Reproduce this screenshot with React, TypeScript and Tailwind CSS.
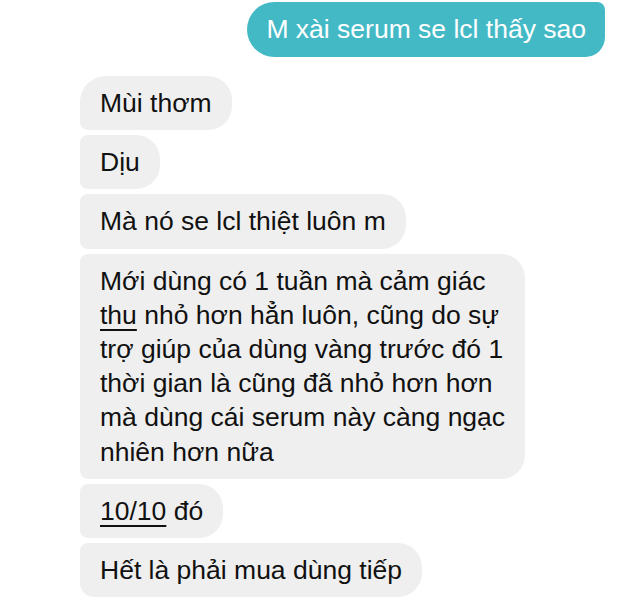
import React from "react";

type Msg = {
  text: React.ReactNode;
  shape: string;
};

const incoming: Msg[] = [
  { text: "Mùi thơm", shape: "rounded-tl-[26px] rounded-bl-[8px]" },
  { text: "Dịu", shape: "rounded-tl-[8px] rounded-bl-[8px]" },
  { text: "Mà nó se lcl thiệt luôn m", shape: "rounded-tl-[8px] rounded-bl-[8px]" },
  {
    text: (
      <>
        Mới dùng có 1 tuần mà cảm giác
        <br />
        <span className="underline underline-offset-[5px] decoration-[1.5px]">thu</span> nhỏ hơn hẳn luôn, cũng do sự
        <br />
        trợ giúp của dùng vàng trước đó 1
        <br />
        thời gian là cũng đã nhỏ hơn hơn
        <br />
        mà dùng cái serum này càng ngạc
        <br />
        nhiên hơn nữa
      </>
    ),
    shape: "rounded-tl-[8px] rounded-bl-[8px]",
  },
  {
    text: (
      <>
        <span className="underline underline-offset-[5px] decoration-[1.5px]">10/10</span> đó
      </>
    ),
    shape: "rounded-tl-[8px] rounded-bl-[8px]",
  },
  { text: "Hết là phải mua dùng tiếp", shape: "rounded-tl-[8px] rounded-bl-[14px]" },
];

export default function App() {
  return (
    <main
      className="w-[640px] h-[600px] bg-white overflow-hidden pt-[2px]"
      style={{ fontFamily: '"Liberation Sans", Arial, sans-serif' }}
    >
      {/* outgoing */}
      <div className="flex justify-end pr-[35px]">
        <div className="bg-[#44b9c6] text-white text-[26.5px] leading-[35px] px-[19px] py-[10px] rounded-l-[28px] rounded-tr-[8px] rounded-br-[20px]">
          M xài serum se lcl thấy sao
        </div>
      </div>

      {/* incoming */}
      <div className="flex flex-col items-start gap-[5px] pl-[80px] mt-[19px]">
        {incoming.map((m, i) => (
          <div
            key={i}
            className={`bg-[#efefef] text-[#111] text-[26.5px] leading-[34.2px] px-[20px] py-[10px] rounded-r-[24px] ${m.shape}`}
          >
            {m.text}
          </div>
        ))}
      </div>
    </main>
  );
}
